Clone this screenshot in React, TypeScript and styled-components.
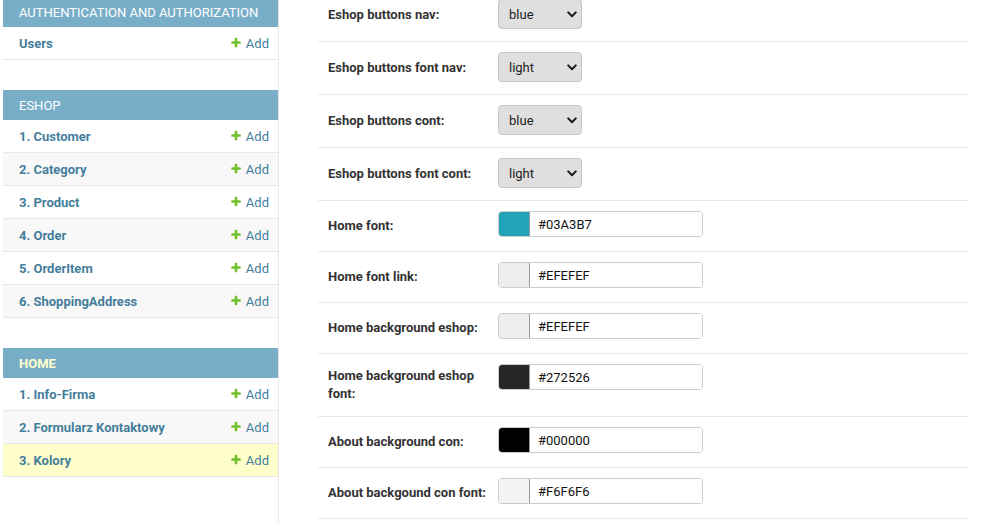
import React from "react";
import styled, { createGlobalStyle, css } from "styled-components";

const GlobalStyle = createGlobalStyle`
  html, body { margin: 0; padding: 0; background: #fff; overflow: hidden; }
  body { font-family: Roboto, "Liberation Sans", Arial, sans-serif; color: #333; }
  * { box-sizing: border-box; }
`;

const Page = styled.div`
  display: flex;
  align-items: stretch;
  min-height: 100vh;
`;

const Sidebar = styled.nav`
  flex: 0 0 276px;
  width: 276px;
  min-width: 0;
  margin-left: 3px;
  margin-top: -3px;
  border-right: 1px solid #e8e8e8;
  overflow: hidden;
`;

const Module = styled.div`
  margin-bottom: 30px;
`;

const Caption = styled.div<{ $current?: boolean }>`
  height: 30px;
  display: flex;
  align-items: center;
  padding: 0 16px;
  background: #79aec8;
  color: #fff;
  font-size: 13px;
  letter-spacing: 0;
  text-transform: uppercase;
  white-space: nowrap;
  overflow: hidden;
  ${(p) =>
    p.$current &&
    css`
      color: #ffc;
      font-weight: bold;
    `}
`;

const ModelRow = styled.div<{ $tone: "plain" | "alt" | "current" }>`
  height: 33px;
  display: flex;
  align-items: center;
  justify-content: space-between;
  padding: 0 9px 0 16px;
  border-bottom: 1px solid #e8e8e8;
  background: ${(p) =>
    p.$tone === "current" ? "#ffc" : p.$tone === "alt" ? "#f8f8f8" : "#fff"};
`;

const ModelName = styled.span`
  font-size: 13px;
  font-weight: bold;
  color: #447e9b;
`;

const AddLink = styled.span`
  display: flex;
  align-items: center;
  gap: 4px;
  font-size: 13px;
  color: #447e9b;
`;

const Main = styled.main`
  flex: 1;
  min-width: 0;
  margin-top: -11px;
  padding: 0 23px 0 39px;
`;

const FormRow = styled.div`
  display: flex;
  align-items: flex-start;
  padding: 10px;
  border-bottom: 1px solid #e8e8e8;
`;

const Label = styled.label`
  flex: 0 0 170px;
  align-self: center;
  padding: 3px 10px 3px 0;
  font-size: 13px;
  line-height: 18px;
  font-weight: bold;
  color: #333;
`;

const SelectWrap = styled.div`
  position: relative;
  height: 32px;
  width: 84px;
`;

const Select = styled.select`
  appearance: none;
  -webkit-appearance: none;
  width: 84px;
  height: 30px;
  padding: 0 20px 0 10px;
  border: 1px solid #c6c6c6;
  border-radius: 4px;
  background: #dfdfdf;
  font-family: Roboto, "Liberation Sans", Arial, sans-serif;
  font-size: 13px;
  color: #222;
  outline: none;
`;

const Chevron = styled.svg`
  position: absolute;
  right: 5px;
  top: 12px;
  pointer-events: none;
`;

const ColorWidget = styled.div`
  display: flex;
  width: 205px;
  height: 26px;
  margin-bottom: 4px;
  border: 1px solid #cccccc;
  border-radius: 4px;
  overflow: hidden;
`;

const Swatch = styled.div<{ $color: string }>`
  flex: 0 0 31px;
  background: ${(p) => p.$color};
  border-right: 1px solid #9a9a9a;
`;

const HexInput = styled.input`
  flex: 1;
  min-width: 0;
  border: none;
  padding: 0 8px;
  font-family: Roboto, "Liberation Sans", Arial, sans-serif;
  font-size: 13px;
  color: #111;
  background: #fff;
  outline: none;
`;

const PlusIcon = () => (
  <svg width="12" height="12" viewBox="0 0 1792 1792" aria-hidden="true">
    <path
      fill="#70bf2b"
      d="M1600 736v192q0 40-28 68t-68 28h-416v416q0 40-28 68t-68 28h-192q-40 0-68-28t-28-68v-416h-416q-40 0-68-28t-28-68v-192q0-40 28-68t68-28h416v-416q0-40 28-68t68-28h192q40 0 68 28t28 68v416h416q40 0 68 28t28 68z"
    />
  </svg>
);

type ModelItem = { name: string; current?: boolean };
type AppEntry = { title: string; current?: boolean; models: ModelItem[] };

const apps: AppEntry[] = [
  { title: "Authentication and Authorization", models: [{ name: "Users" }] },
  {
    title: "Eshop",
    models: [
      { name: "1. Customer" },
      { name: "2. Category" },
      { name: "3. Product" },
      { name: "4. Order" },
      { name: "5. OrderItem" },
      { name: "6. ShoppingAddress" },
    ],
  },
  {
    title: "Home",
    current: true,
    models: [
      { name: "1. Info-Firma" },
      { name: "2. Formularz Kontaktowy" },
      { name: "3. Kolory", current: true },
    ],
  },
];

type Field =
  | { kind: "select"; label: string; value: string; options: string[] }
  | { kind: "color"; label: string; value: string; swatch: string };

const fields: Field[] = [
  { kind: "select", label: "Eshop buttons nav:", value: "blue", options: ["blue", "red", "green"] },
  { kind: "select", label: "Eshop buttons font nav:", value: "light", options: ["light", "dark"] },
  { kind: "select", label: "Eshop buttons cont:", value: "blue", options: ["blue", "red", "green"] },
  { kind: "select", label: "Eshop buttons font cont:", value: "light", options: ["light", "dark"] },
  { kind: "color", label: "Home font:", value: "#03A3B7", swatch: "#23a3b7" },
  { kind: "color", label: "Home font link:", value: "#EFEFEF", swatch: "#eeeeee" },
  { kind: "color", label: "Home background eshop:", value: "#EFEFEF", swatch: "#eeeeee" },
  { kind: "color", label: "Home background eshop font:", value: "#272526", swatch: "#272526" },
  { kind: "color", label: "About background con:", value: "#000000", swatch: "#000000" },
  { kind: "color", label: "About backgound con font:", value: "#F6F6F6", swatch: "#f4f4f4" },
];

export default function AppRoot() {
  return (
    <>
      <GlobalStyle />
      <Page>
        <Sidebar>
          {apps.map((app) => (
            <Module key={app.title}>
              <Caption $current={app.current}>{app.title}</Caption>
              {app.models.map((m, i) => (
                <ModelRow
                  key={m.name}
                  $tone={m.current ? "current" : i % 2 === 1 ? "alt" : "plain"}
                >
                  <ModelName>{m.name}</ModelName>
                  <AddLink>
                    <PlusIcon />
                    Add
                  </AddLink>
                </ModelRow>
              ))}
            </Module>
          ))}
        </Sidebar>
        <Main>
          {fields.map((f) => (
            <FormRow key={f.label}>
              <Label>{f.label}</Label>
              {f.kind === "select" ? (
                <SelectWrap>
                  <Select defaultValue={f.value}>
                    {f.options.map((o) => (
                      <option key={o} value={o}>
                        {o}
                      </option>
                    ))}
                  </Select>
                  <Chevron width="10" height="7" viewBox="0 0 10 7" aria-hidden="true">
                    <path
                      d="M1.2 1.4 L5 5.2 L8.8 1.4"
                      fill="none"
                      stroke="#1a1a1a"
                      strokeWidth="2"
                      strokeLinecap="round"
                      strokeLinejoin="round"
                    />
                  </Chevron>
                </SelectWrap>
              ) : (
                <ColorWidget>
                  <Swatch $color={f.swatch} />
                  <HexInput defaultValue={f.value} />
                </ColorWidget>
              )}
            </FormRow>
          ))}
        </Main>
      </Page>
    </>
  );
}
